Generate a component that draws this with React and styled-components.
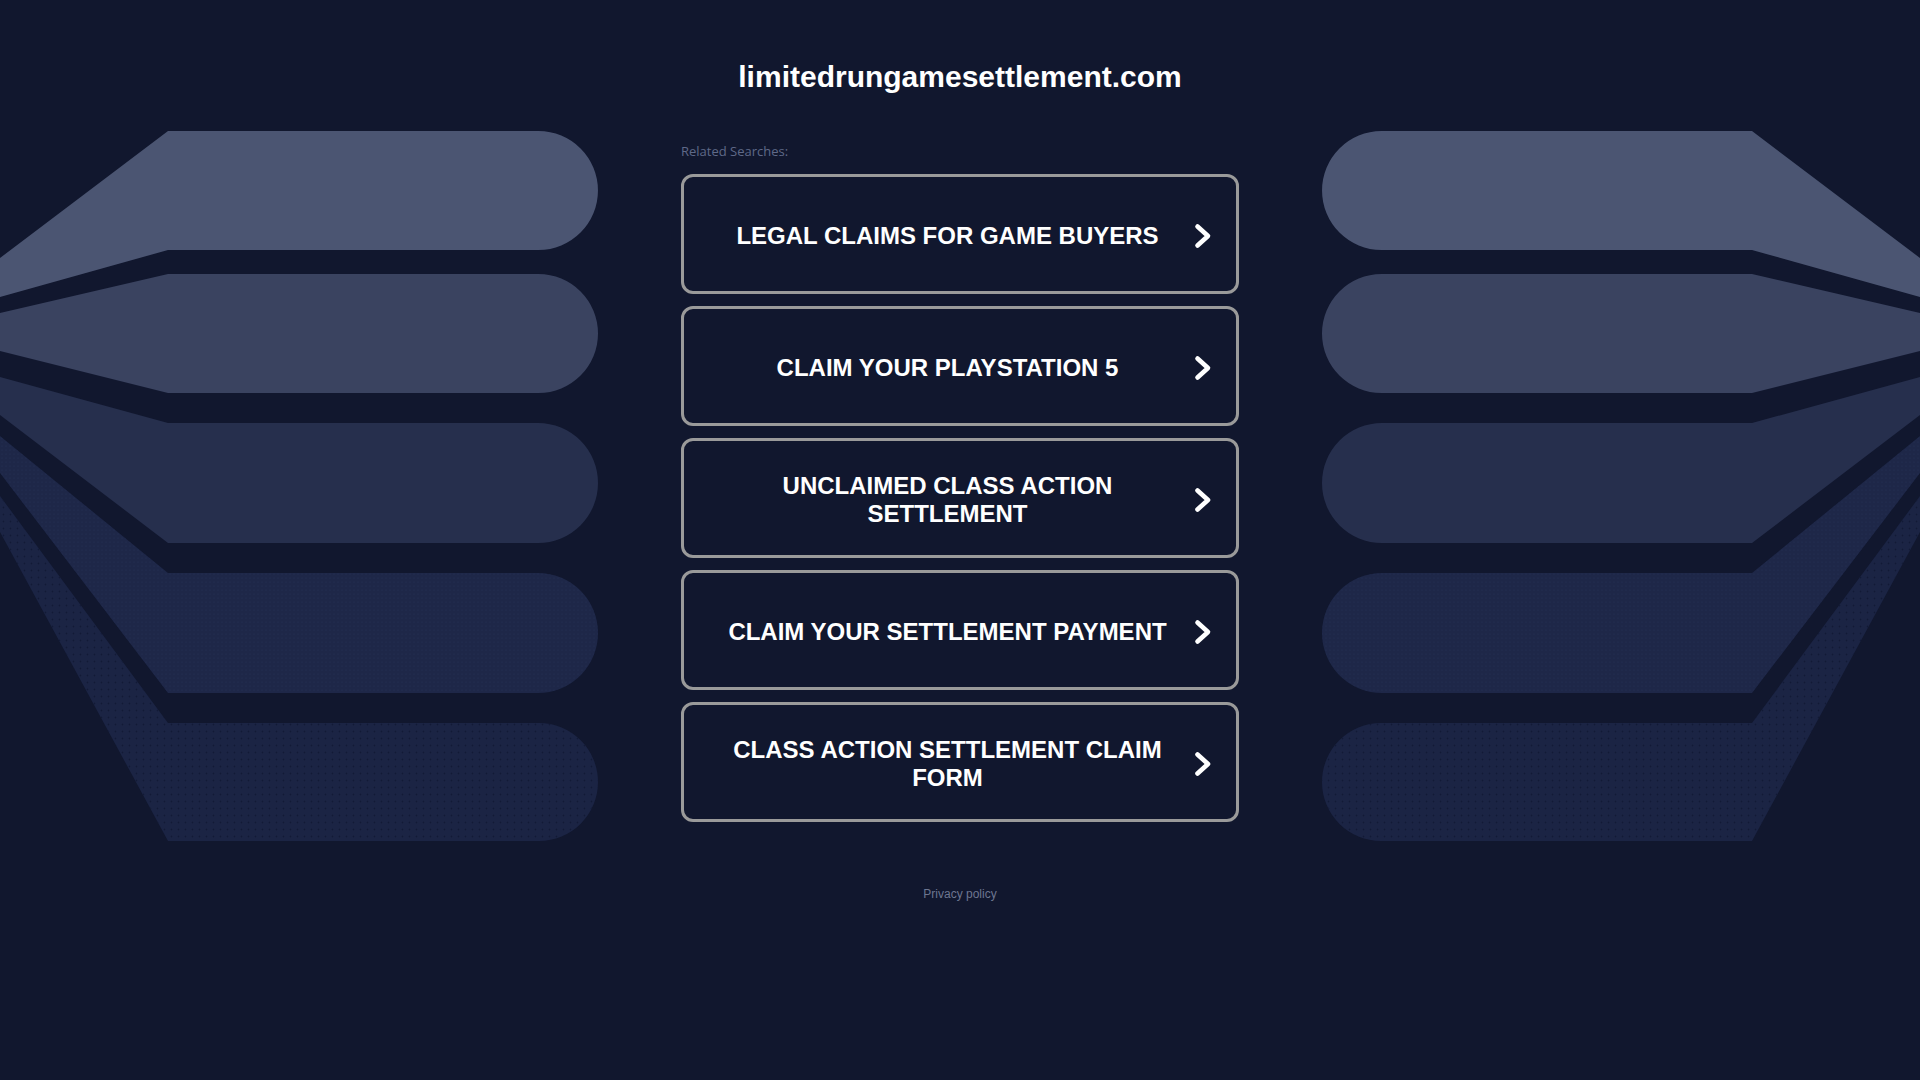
import React from "react";
import styled, { createGlobalStyle } from "styled-components";

const GlobalStyle = createGlobalStyle`
  html, body {
    margin: 0;
    padding: 0;
    background: #11172e;
  }
  body {
    font-family: "Liberation Sans", Arial, sans-serif;
    color: #ffffff;
  }
  * { box-sizing: border-box; }
`;

const Page = styled.div`
  position: relative;
  min-height: 100vh;
  overflow: hidden;
  background: #11172e;
`;

const Decoration = styled.svg`
  position: absolute;
  top: 0;
  ${(p) => (p.$side === "right" ? "right: 0; transform: scaleX(-1);" : "left: 0;")}
  width: 600px;
  height: 850px;
  pointer-events: none;
`;

const Content = styled.main`
  position: relative;
  z-index: 1;
  width: 558px;
  margin: 0 auto;
  display: flex;
  flex-direction: column;
  padding-top: 59px;
`;

const Title = styled.h1`
  margin: 0;
  font-family: "Liberation Sans", Arial, sans-serif;
  font-size: 30px;
  line-height: 36px;
  font-weight: 700;
  text-align: center;
  color: #ffffff;
  white-space: nowrap;
`;

const RelatedLabel = styled.div`
  margin-top: 48px;
  font-family: "Open Sans", "Liberation Sans", sans-serif;
  font-size: 13px;
  line-height: 16px;
  color: #5f6988;
`;

const LinkList = styled.div`
  margin-top: 15px;
  display: flex;
  flex-direction: column;
  gap: 12px;
`;

const LinkCard = styled.a`
  display: flex;
  align-items: center;
  height: 120px;
  padding: 4px 24px 0 38px;
  border: 3px solid #9a9a9a;
  border-radius: 12px;
  color: #ffffff;
  text-decoration: none;
  cursor: pointer;
`;

const LinkText = styled.span`
  flex: 1;
  text-align: center;
  font-family: "Liberation Sans", Arial, sans-serif;
  font-weight: 700;
  font-size: 24px;
  line-height: 28px;
  text-transform: uppercase;
`;

const ChevronIcon = styled.svg`
  flex: none;
  width: 18px;
  height: 26px;
  margin-left: 21px;
`;

const Footer = styled.footer`
  margin-top: 62px;
  text-align: center;
`;

const PrivacyLink = styled.a`
  font-family: "Liberation Sans", Arial, sans-serif;
  font-size: 12px;
  line-height: 16px;
  color: #6d7690;
  text-decoration: none;
`;

const bands = [
  { d: "M0 258 L168 131 H538.5 A59.5 59.5 0 0 1 538.5 250 H168 L0 297 Z", fill: "#4b5572" },
  { d: "M0 313 L168 274 H538.5 A59.5 59.5 0 0 1 538.5 393 H168 L0 351 Z", fill: "#3a4360" },
  { d: "M0 377 L168 423 H538 A60 60 0 0 1 538 543 H168 L0 415 Z", fill: "#262f4d" },
  { d: "M0 436 L168 573 H538 A60 60 0 0 1 538 693 H168 L0 473 Z", fill: "#1e2748", pattern: "fine" },
  { d: "M0 496 L168 723 H539 A59 59 0 0 1 539 841 H168 L0 532 Z", fill: "#1b2444", pattern: "coarse" },
];

function Side({ side }) {
  const id = side;
  return (
    <Decoration $side={side} viewBox="0 0 600 850" aria-hidden="true">
      <defs>
        <pattern id={`fine-${id}`} width="4" height="4" patternUnits="userSpaceOnUse">
          <circle cx="2" cy="2" r="0.6" fill="#243053" />
        </pattern>
        <pattern id={`coarse-${id}`} width="7" height="7" patternUnits="userSpaceOnUse">
          <circle cx="3.5" cy="3.5" r="0.9" fill="#121a36" />
        </pattern>
      </defs>
      {bands.map((b, i) => (
        <g key={i}>
          <path d={b.d} fill={b.fill} />
          {b.pattern && <path d={b.d} fill={`url(#${b.pattern}-${id})`} />}
        </g>
      ))}
    </Decoration>
  );
}

function Chevron() {
  return (
    <ChevronIcon viewBox="0 0 18 26" aria-hidden="true">
      <path
        d="M3.5 3.5 L14 13 L3.5 22.5"
        fill="none"
        stroke="#ffffff"
        strokeWidth="4.6"
        strokeLinecap="round"
        strokeLinejoin="round"
      />
    </ChevronIcon>
  );
}

const links = [
  "Legal Claims for Game Buyers",
  "Claim Your Playstation 5",
  "Unclaimed Class Action Settlement",
  "Claim Your Settlement Payment",
  "Class Action Settlement Claim Form",
];

export default function App() {
  return (
    <Page>
      <GlobalStyle />
      <Side side="left" />
      <Side side="right" />
      <Content>
        <Title>limitedrungamesettlement.com</Title>
        <RelatedLabel>Related Searches:</RelatedLabel>
        <LinkList>
          {links.map((t) => (
            <LinkCard key={t} href="#">
              <LinkText>{t}</LinkText>
              <Chevron />
            </LinkCard>
          ))}
        </LinkList>
        <Footer>
          <PrivacyLink href="#">Privacy policy</PrivacyLink>
        </Footer>
      </Content>
    </Page>
  );
}
